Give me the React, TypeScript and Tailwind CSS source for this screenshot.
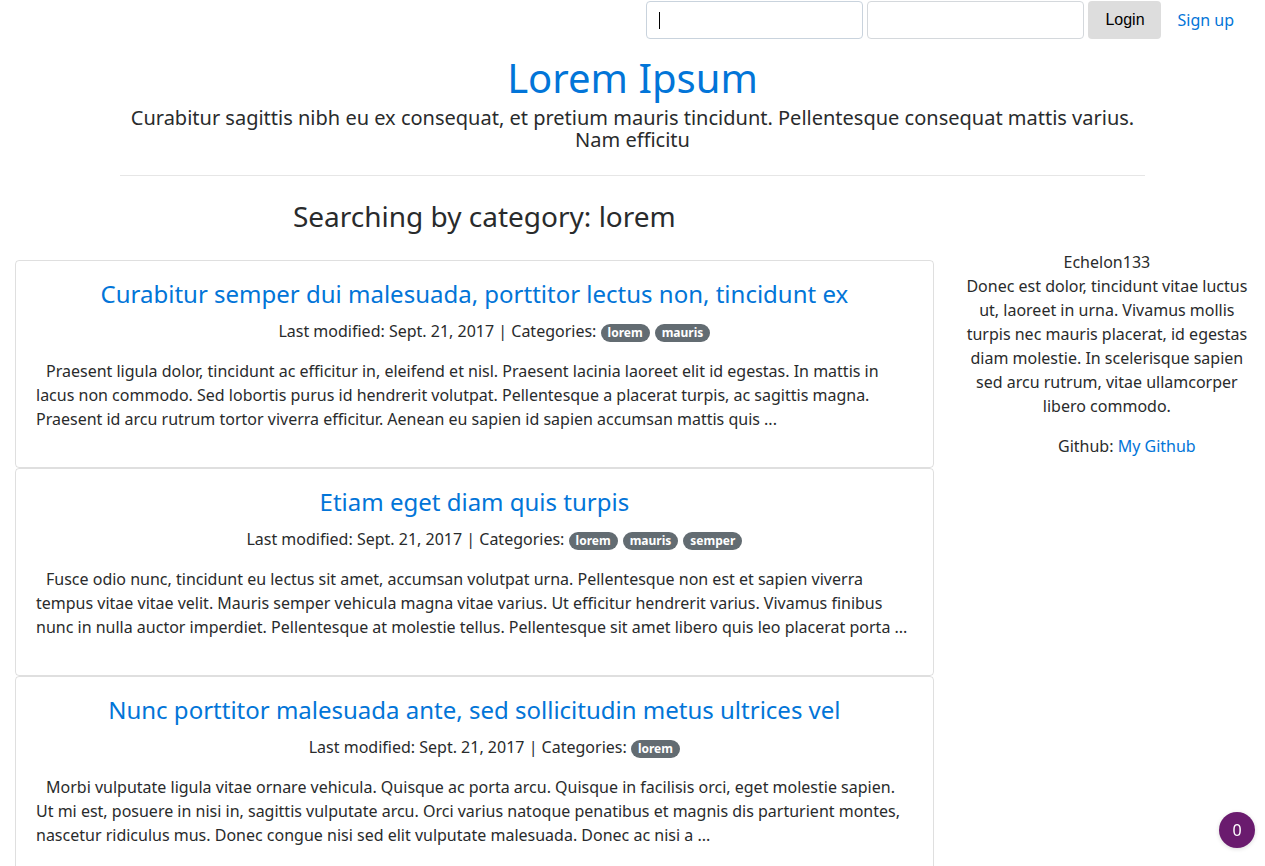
import React from "react";

const posts = [
  {
    title: "Curabitur semper dui malesuada, porttitor lectus non, tincidunt ex",
    cats: ["lorem", "mauris"],
    text: "Praesent ligula dolor, tincidunt ac efficitur in, eleifend et nisl. Praesent lacinia laoreet elit id egestas. In mattis in lacus non commodo. Sed lobortis purus id hendrerit volutpat. Pellentesque a placerat turpis, ac sagittis magna. Praesent id arcu rutrum tortor viverra efficitur. Aenean eu sapien id sapien accumsan mattis quis ...",
  },
  {
    title: "Etiam eget diam quis turpis",
    cats: ["lorem", "mauris", "semper"],
    text: "Fusce odio nunc, tincidunt eu lectus sit amet, accumsan volutpat urna. Pellentesque non est et sapien viverra tempus vitae vitae velit. Mauris semper vehicula magna vitae varius. Ut efficitur hendrerit varius. Vivamus finibus nunc in nulla auctor imperdiet. Pellentesque at molestie tellus. Pellentesque sit amet libero quis leo placerat porta ...",
  },
  {
    title: "Nunc porttitor malesuada ante, sed sollicitudin metus ultrices vel",
    cats: ["lorem"],
    text: "Morbi vulputate ligula vitae ornare vehicula. Quisque ac porta arcu. Quisque in facilisis orci, eget molestie sapien. Ut mi est, posuere in nisi in, sagittis vulputate arcu. Orci varius natoque penatibus et magnis dis parturient montes, nascetur ridiculus mus. Donec congue nisi sed elit vulputate malesuada. Donec ac nisi a ...",
  },
];

export default function App() {
  return (
    <div className="min-h-[866px] bg-white text-[#292b2c] text-[16px] leading-[24px] font-['Noto_Sans',sans-serif]">
      {/* top bar */}
      <div className="flex justify-end items-center pr-[31px] h-[40px]">
        <div className="flex items-center gap-[4px]">
          <div className="w-[217px] h-[38px] border border-[#c9d3dd] rounded-[4px] bg-white flex items-center pl-[12px]">
            <div className="w-[1px] h-[17px] bg-black" />
          </div>
          <div className="w-[217px] h-[38px] border border-[#d4d8dc] rounded-[4px] bg-white" />
          <button className="w-[73px] h-[38px] bg-[#dddddd] rounded-[4px] text-black text-[16px] font-['Liberation_Sans',Arial,sans-serif]">
            Login
          </button>
        </div>
        <a className="ml-[16px] text-[#0275d8] -mt-[1px]">Sign up</a>
      </div>

      {/* header */}
      <div className="mx-[120px] text-center">
        <h1 className="mt-[14px] text-[40px] leading-[48px] font-normal text-[#0275d8]">Lorem Ipsum</h1>
        <p className="mt-[5px] text-[20px] leading-[22px]">
          Curabitur sagittis nibh eu ex consequat, et pretium mauris tincidunt. Pellentesque consequat mattis varius. Nam efficitu
        </p>
        <hr className="mt-[24px] border-0 border-t border-[#e6e6e6]" />
      </div>

      <div className="w-[948.75px] px-[15px]">
        <h3 className="mt-[23px] pl-[20px] text-center text-[28px] leading-[34px] font-normal">
          Searching by category: lorem
        </h3>
      </div>

      {/* body row */}
      <div className="flex mt-[17px]">
        <div className="w-[948.75px] px-[15px] shrink-0">
          <div className="mt-[10px] flex flex-col">
            {posts.map((p, i) => (
              <div key={i} className="border border-[rgba(0,0,0,0.125)] rounded-[4px] px-[20px] pt-[19px] pb-[20px]">
                <h4 className="text-center text-[24px] leading-[28px] font-normal text-[#0275d8] mb-[11px]">{p.title}</h4>
                <p className="text-center pl-[40px] mb-[16px]">
                  Last modified: Sept. 21, 2017 | Categories:{" "}
                  {p.cats.map((c) => (
                    <span
                      key={c}
                      className="inline-block align-[0px] mr-[5px] last:mr-0 bg-[#636c72] text-white text-[12px] leading-[12px] font-bold px-[7px] py-[3px] rounded-full"
                    >
                      {c}
                    </span>
                  ))}
                </p>
                <p className="indent-[10px] mb-[16px]">{p.text}</p>
              </div>
            ))}
          </div>
        </div>
        <div className="flex-1 px-[15px] text-center">
          <div>Echelon133</div>
          <p>
            Donec est dolor, tincidunt vitae luctus ut, laoreet in urna. Vivamus mollis turpis nec mauris placerat, id egestas diam molestie. In scelerisque sapien sed arcu rutrum, vitae ullamcorper libero commodo.
          </p>
          <ul className="mt-[16px] pl-[40px]">
            <li>
              Github: <a className="text-[#0275d8]">My Github</a>
            </li>
          </ul>
        </div>
      </div>

      <div className="fixed right-[10px] bottom-[18px] w-[36px] h-[36px] rounded-full bg-[#6a1b6e] text-white flex items-center justify-center text-[16px] shadow-[0_1px_4px_rgba(0,0,0,0.15)]">
        0
      </div>
    </div>
  );
}
